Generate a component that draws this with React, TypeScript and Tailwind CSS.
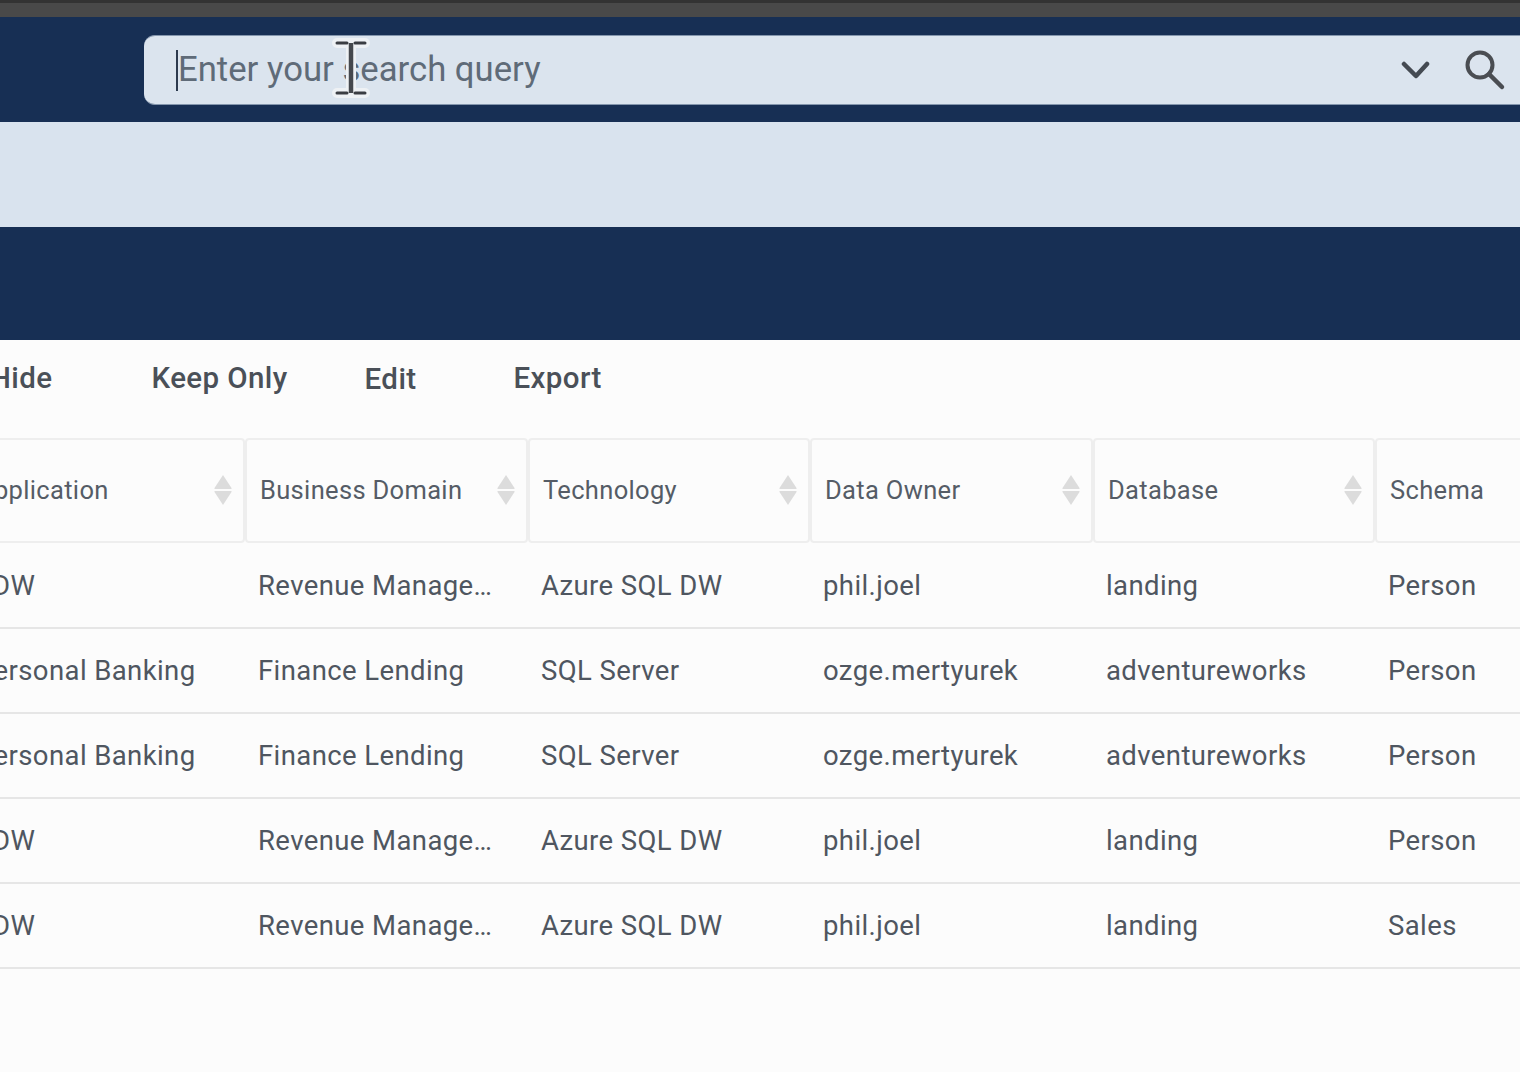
const columns = ["Application", "Business Domain", "Technology", "Data Owner", "Database", "Schema"];

const rows = [
  ["EDW", "Revenue Manage…", "Azure SQL DW", "phil.joel", "landing", "Person"],
  ["Personal Banking", "Finance Lending", "SQL Server", "ozge.mertyurek", "adventureworks", "Person"],
  ["Personal Banking", "Finance Lending", "SQL Server", "ozge.mertyurek", "adventureworks", "Person"],
  ["EDW", "Revenue Manage…", "Azure SQL DW", "phil.joel", "landing", "Person"],
  ["EDW", "Revenue Manage…", "Azure SQL DW", "phil.joel", "landing", "Sales"],
];

const gridCols = "grid grid-cols-[284px_283px_282px_283px_282px_283px] w-[1697px] -ml-[39px]";

function SortArrows() {
  return (
    <svg width="20" height="34" viewBox="0 0 20 34" className="mb-[2px] shrink-0">
      <path d="M10 2 L18.5 15 Q19 16 18 16 L2 16 Q1 16 1.5 15 Z" fill="#dcdcdc" />
      <path d="M10 32 L18.5 19 Q19 18 18 18 L2 18 Q1 18 1.5 19 Z" fill="#dcdcdc" />
    </svg>
  );
}

function SearchBar() {
  return (
    <div className="relative flex h-[70px] flex-1 items-center rounded-l-[11px] border-y border-[#8496ad] bg-[#dbe4ee] pl-[32px]">
      <div className="h-[41px] w-[2px] bg-[#2c3a4e]" />
      <span className="pb-[2px] text-[34.7px] leading-none text-[#5f6b78]">Enter your search query</span>
      <svg width="30" height="18" viewBox="0 0 30 18" className="ml-auto mr-[1px]" fill="none" stroke="#444a52" strokeWidth="4.5" strokeLinecap="round" strokeLinejoin="round">
        <path d="M3 3 L15 15 L26 3" />
      </svg>
      <svg width="44" height="44" viewBox="0 0 44 44" className="ml-[31px] mr-[13px]" fill="none" stroke="#4a4d52" strokeLinecap="round">
        <circle cx="17" cy="17" r="12.5" strokeWidth="4" />
        <path d="M26 26 L39 39" strokeWidth="4.5" />
      </svg>
      {/* mouse cursor over the input */}
      <svg width="40" height="64" viewBox="0 0 40 64" className="absolute left-[187px] top-0" fill="none" strokeLinecap="round">
        <path d="M6 7 H34 M6 57 H34 M20 7 V57" stroke="#eef1f4" strokeWidth="10" />
        <path d="M6 7 H16 M24 7 H34 M6 57 H16 M24 57 H34" stroke="#3a3d42" strokeWidth="3" />
        <path d="M20 7 V57" stroke="#45484d" strokeWidth="4.5" strokeLinecap="butt" />
      </svg>
    </div>
  );
}

export default function App() {
  return (
    <div className="flex h-[1072px] w-[1520px] flex-col overflow-hidden bg-[#fcfcfc] font-['Roboto',sans-serif]">
      <div className="h-[17px] border-t-[3px] border-[#333333] bg-[#494949]" />
      <div className="flex h-[105px] items-center bg-[#172f54] pl-[144px] pt-[1px]">
        <SearchBar />
      </div>
      <div className="h-[105px] bg-[#d9e3ee]" />
      <div className="h-[113px] bg-[#172f54]" />

      <div className="-ml-[10px] flex h-[98px] items-center pb-[22px] text-[29.5px] font-medium tracking-[0.4px] text-[#4a5058]">
        <span>Hide</span>
        <span className="ml-[99px]">Keep Only</span>
        <span className="ml-[77px] mt-[3px]">Edit</span>
        <span className="ml-[97px]">Export</span>
      </div>

      <div className={gridCols}>
        {columns.map((c, j) => (
          <div key={c} className={`flex h-[105px] items-center justify-between rounded-[4px] border-2 border-[#eeeeee] pr-[10px] ${j === 0 ? "pl-[14px]" : "pl-[13px]"}`}>
            <span className="text-[25.5px] tracking-[0.33px] text-[#555c66]">{c}</span>
            <SortArrows />
          </div>
        ))}
      </div>

      <div className="mt-px">
        {rows.map((row, i) => (
          <div key={i} className={`${gridCols} h-[85px] items-center border-b-2 border-[#e6e6e6]`}>
            {row.map((cell, j) => (
              <div key={j} className={`whitespace-nowrap text-[27.5px] tracking-[0.4px] text-[#4f5660] ${j === 0 ? "pl-[15px]" : "pl-[13px]"}`}>
                {cell}
              </div>
            ))}
          </div>
        ))}
      </div>
    </div>
  );
}
